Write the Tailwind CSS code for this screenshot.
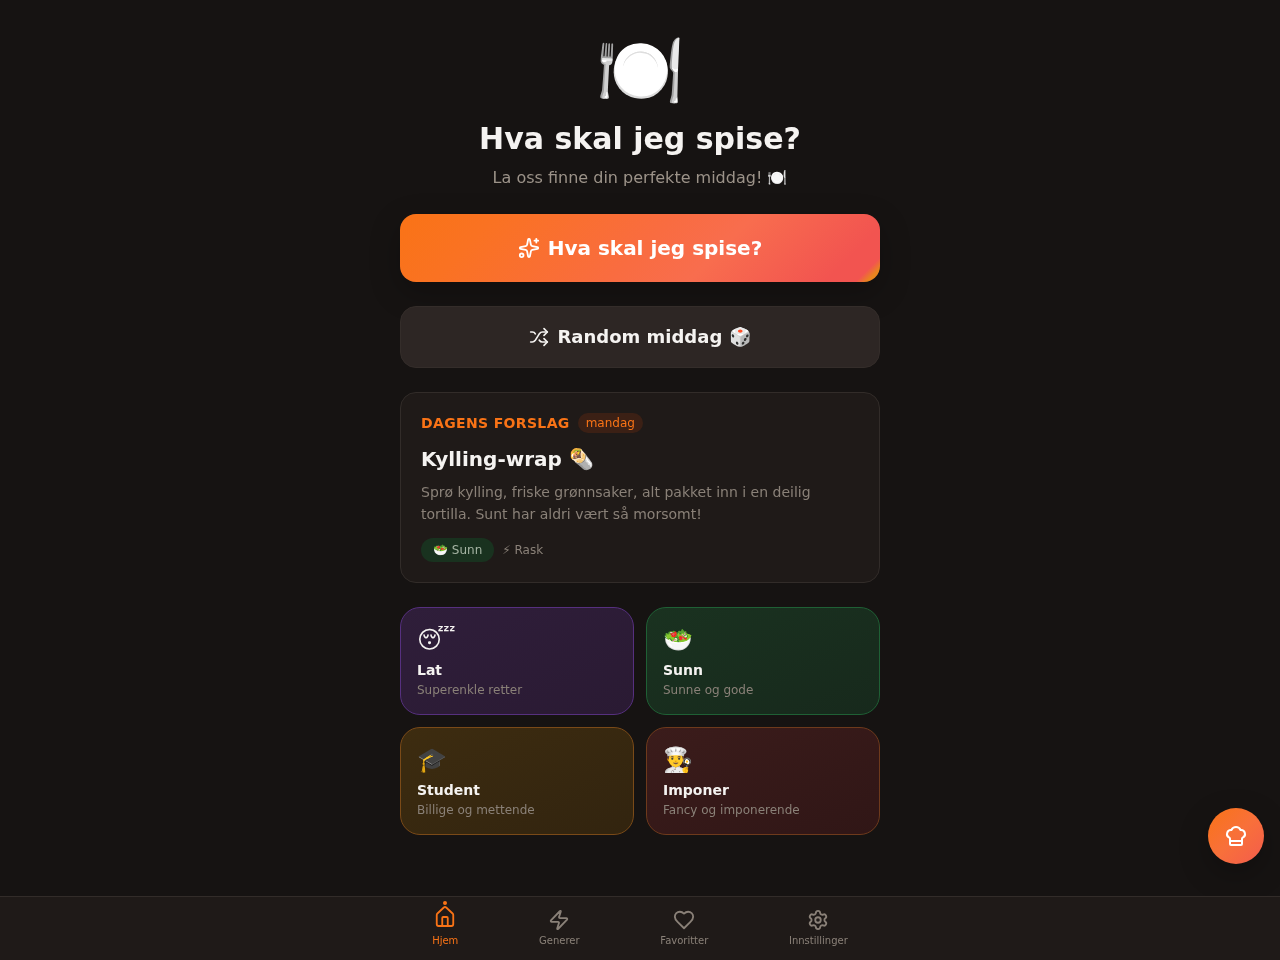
<!DOCTYPE html>
<html lang="no">
<head>
  <meta charset="UTF-8" />
  <meta name="viewport" content="width=device-width, initial-scale=1.0" />
  <title>Hva skal jeg spise?</title>
  <script src="https://cdn.jsdelivr.net/npm/@tailwindcss/browser@4"></script>
</head>
<body class="bg-[#161312] text-[#f5f3f1] font-['DejaVu_Sans',sans-serif] h-[960px] overflow-hidden relative">
  <!-- main -->
  <main class="w-[480px] mx-auto pt-6 flex flex-col will-change-transform">
    <div class="text-center mb-6">
      <div class="text-[72px] leading-[90px] mb-[7px] rotate-[3deg] brightness-[1.04]">🍽️</div>
      <h1 class="text-[30px] leading-9 font-bold mb-[9px]">Hva skal jeg spise?</h1>
      <p class="text-base leading-6 text-[#9c9389]">La oss finne din perfekte middag! 🍽️</p>
    </div>

    <!-- buttons -->
    <button class="h-[68px] rounded-2xl bg-[linear-gradient(135deg,#f97316_0%,#fa7222_18%,#f96c40_50%,#f86d4e_65%,#f25450_90%,#f25450_95.5%,#e8841f_97.5%,#e8841f_100%)] flex items-center justify-center gap-2 text-xl font-bold text-white mb-6 shadow-[0_10px_30px_rgba(0,0,0,0.25)]">
      <svg class="w-[22px] h-[22px]" viewBox="0 0 24 24" fill="none" stroke="currentColor" stroke-width="2" stroke-linecap="round" stroke-linejoin="round"><path d="M11.017 2.814a1 1 0 0 1 1.966 0l1.051 5.558a2 2 0 0 0 1.594 1.594l5.558 1.051a1 1 0 0 1 0 1.966l-5.558 1.051a2 2 0 0 0-1.594 1.594l-1.051 5.558a1 1 0 0 1-1.966 0l-1.051-5.558a2 2 0 0 0-1.594-1.594l-5.558-1.051a1 1 0 0 1 0-1.966l5.558-1.051a2 2 0 0 0 1.594-1.594z"/><path d="M20 2v4"/><path d="M22 4h-4"/><circle cx="4" cy="20" r="2"/></svg>
      Hva skal jeg spise?
    </button>
    <button class="h-[62px] rounded-2xl bg-[#2d2624] border border-[#342d2a] flex items-center justify-center gap-2 text-lg font-bold text-[#f5f3f1] mb-6">
      <svg class="w-5 h-5" viewBox="0 0 24 24" fill="none" stroke="currentColor" stroke-width="2" stroke-linecap="round" stroke-linejoin="round"><path d="m18 14 4 4-4 4"/><path d="m18 2 4 4-4 4"/><path d="M2 18h1.973a4 4 0 0 0 3.3-1.7l5.454-8.6a4 4 0 0 1 3.3-1.7H22"/><path d="M2 6h1.972a4 4 0 0 1 3.6 2.2"/><path d="M22 18h-6.041a4 4 0 0 1-3.3-1.8l-.359-.45"/></svg>
      Random middag 🎲
    </button>

    <!-- dagens forslag -->
    <section class="h-[191px] rounded-2xl bg-[#1f1a18] border border-[#322c29] px-5 pt-5 mb-6">
      <div class="flex items-center gap-2 mb-3">
        <span class="text-sm leading-5 font-bold tracking-[0.35px] text-[#f97316]">DAGENS FORSLAG</span>
        <span class="text-xs leading-4 text-[#f97316] bg-[#3b2015] rounded-full px-2 py-0.5">mandag</span>
      </div>
      <h2 class="text-xl leading-7 font-bold mb-2">Kylling-wrap 🌯</h2>
      <p class="text-sm leading-[22px] text-[#8a8178] mb-[13px]">Sprø kylling, friske grønnsaker, alt pakket inn i en deilig tortilla. Sunt har aldri vært så morsomt!</p>
      <div class="flex items-center gap-2 text-xs">
        <span class="bg-[#19321f] text-[#a6b5a4] rounded-full px-3 py-1 leading-4">🥗 Sunn</span>
        <span class="text-[#8a8178]">⚡ Rask</span>
      </div>
    </section>

    <!-- kategorier -->
    <div class="grid grid-cols-2 gap-3">
      <button class="h-[108px] rounded-[20px] border border-[#56307f] bg-gradient-to-br from-[#2f1e3a] to-[#2a1a33] p-4 text-left">
        <div class="text-2xl leading-8 mb-1">😴</div>
        <div class="text-sm leading-5 font-bold">Lat</div>
        <div class="text-xs leading-4 mt-0.5 text-[#8a8178]">Superenkle retter</div>
      </button>
      <button class="h-[108px] rounded-[20px] border border-[#1f6035] bg-gradient-to-br from-[#1a3220] to-[#17291c] p-4 text-left">
        <div class="text-2xl leading-8 mb-1">🥗</div>
        <div class="text-sm leading-5 font-bold">Sunn</div>
        <div class="text-xs leading-4 mt-0.5 text-[#8a8178]">Sunne og gode</div>
      </button>
      <button class="h-[108px] rounded-[20px] border border-[#7a4a18] bg-gradient-to-br from-[#3d2c10] to-[#32240f] p-4 text-left">
        <div class="text-2xl leading-8 mb-1">🎓</div>
        <div class="text-sm leading-5 font-bold">Student</div>
        <div class="text-xs leading-4 mt-0.5 text-[#8a8178]">Billige og mettende</div>
      </button>
      <button class="h-[108px] rounded-[20px] border border-[#6e3a1c] bg-gradient-to-br from-[#3b1c1b] to-[#301616] p-4 text-left">
        <div class="text-2xl leading-8 mb-1">👨‍🍳</div>
        <div class="text-sm leading-5 font-bold">Imponer</div>
        <div class="text-xs leading-4 mt-0.5 text-[#8a8178]">Fancy og imponerende</div>
      </button>
    </div>
  </main>

  <!-- chef fab -->
  <button class="absolute left-[1208px] top-[808px] w-14 h-14 rounded-full bg-[linear-gradient(135deg,#f97316_0%,#f8703a_50%,#f45f4a_92%,#e8811f_94%)] flex items-center justify-center text-white shadow-[0_10px_30px_rgba(0,0,0,0.25)]">
    <svg class="w-6 h-6" viewBox="0 0 24 24" fill="none" stroke="currentColor" stroke-width="2" stroke-linecap="round" stroke-linejoin="round"><path d="M17 21a1 1 0 0 0 1-1v-5.35c0-.457.316-.844.727-1.041a4 4 0 0 0-2.134-7.589 5 5 0 0 0-9.186 0 4 4 0 0 0-2.134 7.588c.411.198.727.585.727 1.041V20a1 1 0 0 0 1 1Z"/><path d="M6 17h12"/></svg>
  </button>

  <!-- bunnmeny -->
  <nav class="absolute left-0 right-0 bottom-0 h-16 bg-[#1f1a18] border-t border-[#322c29] will-change-transform">
    <div class="h-full flex items-start justify-center gap-[48.7px] text-[10px] leading-[15px] text-[#8a8178]">
      <a class="relative flex flex-col items-center px-4 pt-3 text-[#f97316]">
        <span class="absolute top-1 w-1 h-1 rounded-full bg-[#f97316]"></span>
        <svg class="w-[22px] h-6 -mt-1 mb-1" preserveAspectRatio="none" viewBox="0 0 24 24" fill="none" stroke="currentColor" stroke-width="2" stroke-linecap="round" stroke-linejoin="round"><path d="M15 21v-8a1 1 0 0 0-1-1h-4a1 1 0 0 0-1 1v8"/><path d="M3 10a2 2 0 0 1 .709-1.528l7-5.999a2 2 0 0 1 2.582 0l7 5.999A2 2 0 0 1 21 10v9a2 2 0 0 1-2 2H5a2 2 0 0 1-2-2z"/></svg>
        Hjem
      </a>
      <a class="flex flex-col items-center px-4 pt-3">
        <svg class="w-[22px] h-[22px] mb-0.5" viewBox="0 0 24 24" fill="none" stroke="currentColor" stroke-width="2" stroke-linecap="round" stroke-linejoin="round"><path d="M4 14a1 1 0 0 1-.78-1.63l9.9-10.2a.5.5 0 0 1 .86.46l-1.92 6.02A1 1 0 0 0 13 10h7a1 1 0 0 1 .78 1.63l-9.9 10.2a.5.5 0 0 1-.86-.46l1.92-6.02A1 1 0 0 0 11 14z"/></svg>
        Generer
      </a>
      <a class="flex flex-col items-center px-4 pt-3">
        <svg class="w-[22px] h-[22px] mb-0.5" viewBox="0 0 24 24" fill="none" stroke="currentColor" stroke-width="2" stroke-linecap="round" stroke-linejoin="round"><path d="M19 14c1.49-1.46 3-3.21 3-5.5A5.5 5.5 0 0 0 16.5 3c-1.76 0-3 .5-4.5 2-1.5-1.5-2.74-2-4.5-2A5.5 5.5 0 0 0 2 8.5c0 2.3 1.5 4.05 3 5.5l7 7Z"/></svg>
        Favoritter
      </a>
      <a class="flex flex-col items-center px-4 pt-3">
        <svg class="w-[22px] h-[22px] mb-0.5" viewBox="0 0 24 24" fill="none" stroke="currentColor" stroke-width="2" stroke-linecap="round" stroke-linejoin="round"><path d="M9.671 4.136a2.34 2.34 0 0 1 4.659 0 2.34 2.34 0 0 0 3.319 1.915 2.34 2.34 0 0 1 2.33 4.033 2.34 2.34 0 0 0 0 3.831 2.34 2.34 0 0 1-2.33 4.033 2.34 2.34 0 0 0-3.319 1.915 2.34 2.34 0 0 1-4.659 0 2.34 2.34 0 0 0-3.32-1.915 2.34 2.34 0 0 1-2.33-4.033 2.34 2.34 0 0 0 0-3.831A2.34 2.34 0 0 1 6.35 6.051a2.34 2.34 0 0 0 3.319-1.915"/><circle cx="12" cy="12" r="3"/></svg>
        Innstillinger
      </a>
    </div>
  </nav>
</body>
</html>
